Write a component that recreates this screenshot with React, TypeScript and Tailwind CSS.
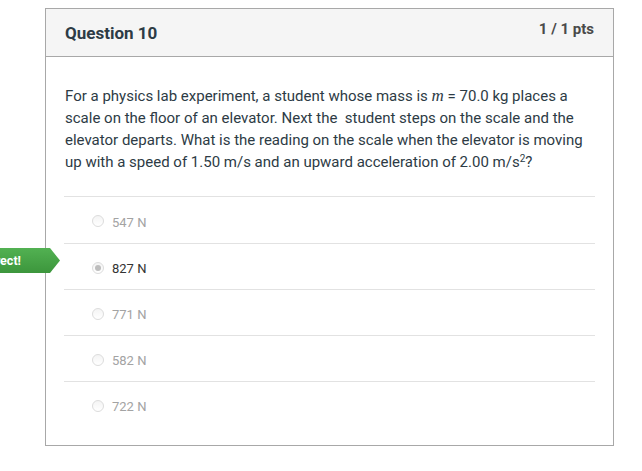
import React from "react";

const answers = [
  { id: 1, label: "547 N", selected: false },
  { id: 2, label: "827 N", selected: true },
  { id: 3, label: "771 N", selected: false },
  { id: 4, label: "582 N", selected: false },
  { id: 5, label: "722 N", selected: false },
];

function Radio({ checked }: { checked: boolean }) {
  return (
    <span className="flex h-[12px] w-[12px] items-center justify-center rounded-full border border-[#dcdcdc] bg-gradient-to-b from-[#f4f4f4] to-[#ffffff]">
      {checked && <span className="h-[6px] w-[6px] rounded-full bg-[#bdbdbd]" />}
    </span>
  );
}

export default function App() {
  return (
    <div
      className="relative h-[471px] w-[642px] overflow-hidden bg-white pt-[8px] pl-[45px]"
      style={{ fontFamily: "Roboto, 'Noto Sans', sans-serif" }}
    >
      {/* Khung câu hỏi */}
      <div className="w-[569px] border border-[#a8a8a8]">
        <div className="flex h-[48px] items-start justify-between border-b border-[#a8a8a8] bg-[#f5f5f5] pl-[19px] pr-[19px]">
          <h2 className="mt-[12px] text-[17px] font-bold leading-[24px] text-[#2d3b45]">Question 10</h2>
          <span className="mt-[10px] text-[15px] font-bold leading-[20px] text-[#4a4a4a]">1 / 1 pts</span>
        </div>

        <div className="px-[18px] pt-[28px] pb-[18px]">
          <p className="pl-[1px] text-[15px] leading-[22px] text-[#2d3b45]">
            For a physics lab experiment, a student whose mass is{" "}
            <span className="text-[17px] italic" style={{ fontFamily: "'Liberation Serif', serif" }}>
              m
            </span>{" "}
            = 70.0 kg places a scale on the floor of an elevator. Next the&nbsp; student steps on the scale and the
            elevator departs. What is the reading on the scale when the elevator is moving up with a speed of 1.50 m/s
            and an upward acceleration of 2.00 m/s<sup className="text-[10px]">2</sup>?
          </p>

          <ul className="mt-[23px]">
            {answers.map((a, i) => (
              <li
                key={a.id}
                className={`flex items-center border-t border-[#e2e2e2] pt-[5px] pl-[28px] ${i === 0 ? "h-[47px]" : "h-[46px]"}`}
              >
                <span className="-mt-[3px]">
                  <Radio checked={a.selected} />
                </span>
                <span
                  className={`ml-[8px] text-[13px] ${a.selected ? "text-[#333333]" : "text-[#a3a3a3]"}`}
                >
                  {a.label}
                </span>
              </li>
            ))}
          </ul>
        </div>
      </div>

      {/* Mũi tên "Correct!" */}
      <div className="absolute left-[-60px] top-[248px] flex h-[25px] w-[120px] items-center justify-end bg-gradient-to-b from-[#52b152] to-[#3c963c] pt-[2px] pr-[39px] text-[12.5px] font-bold text-white [clip-path:polygon(0_0,110px_0,120px_50%,110px_100%,0_100%)]">
        Correct!
      </div>
    </div>
  );
}
